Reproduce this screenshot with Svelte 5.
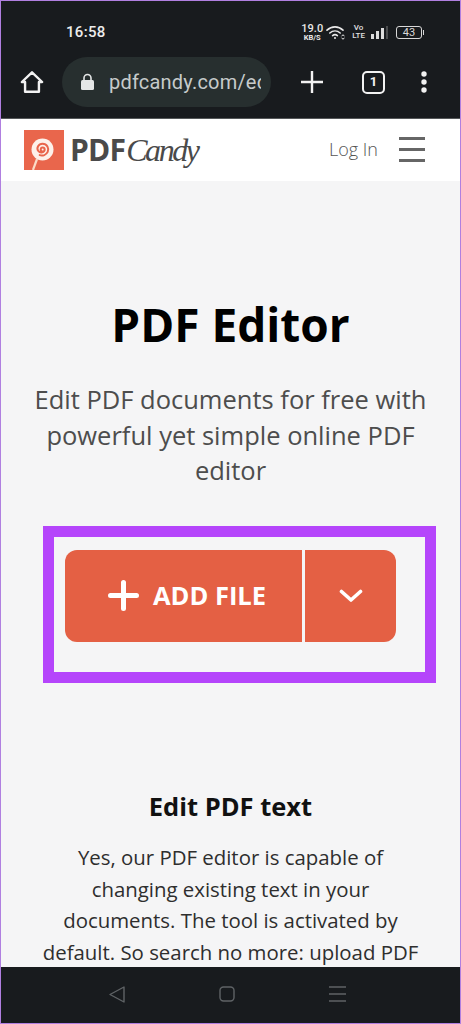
<script>
	const paragraph = [
		"Yes, our PDF editor is capable of",
		"changing existing text in your",
		"documents. The tool is activated by",
		"default. So search no more: upload PDF"
	];
</script>

<div class="phone">
	<header class="chrome">
		<div class="status">
			<span class="time">16:58</span>
			<div class="status-icons">
				<span class="speed"><b>19.0</b><i>KB/S</i></span>
				<svg width="19" height="15" viewBox="0 0 19 15" fill="none" stroke="#e8e8e8" stroke-width="1.6" stroke-linecap="round">
					<path d="M1 5.2C5.6.8 12.4.8 17 5.2" />
					<path d="M3.8 8C6.9 5.3 11.1 5.3 14.2 8" />
					<path d="M6.6 10.6C8 9.4 10 9.4 11.4 10.6" />
					<circle cx="9" cy="13" r="1" fill="#e8e8e8" stroke="none" />
					<path d="M15.8 11l1.2-1.3 1.2 1.3M15.8 13l1.2 1.3 1.2-1.3" stroke-width="1" />
				</svg>
				<span class="volte"><b>Vo</b><b>LTE</b></span>
				<svg class="signal" width="17" height="13" viewBox="0 0 17 13" fill="#dcdcdc">
					<rect x="0" y="8" width="3" height="5" />
					<rect x="5" y="5" width="3" height="8" />
					<rect x="10" y="2" width="3" height="11" />
					<rect x="15" y="0" width="2" height="13" fill="#4a4c4e" />
				</svg>
				<span class="battery">43</span>
			</div>
		</div>
		<div class="toolbar">
			<svg class="home" width="24" height="24" viewBox="0 0 26 26" fill="none" stroke="#f2f2f2" stroke-width="2.6" stroke-linejoin="round">
				<path d="M2 13 13 2.500 24 13h-3.500v10.500h-15V13z" />
			</svg>
			<div class="omnibox">
				<svg width="15" height="18" viewBox="0 0 15 18">
					<path d="M4 8V5a3.500 3.500 0 0 1 7 0v3" fill="none" stroke="#e4e6e6" stroke-width="1.6" />
					<rect x="1" y="7" width="13" height="10" rx="1.500" fill="#e4e6e6" />
				</svg>
				<span class="url">pdfcandy.com/edit</span>
			</div>
			<svg class="plus" width="22" height="22" viewBox="0 0 22 22" stroke="#f2f2f2" stroke-width="2.4">
				<path d="M11 0v22M0 11h22" />
			</svg>
			<span class="tabs">1</span>
			<svg class="more" width="6" height="22" viewBox="0 0 6 22" fill="#f2f2f2">
				<circle cx="3" cy="3" r="2.700" />
				<circle cx="3" cy="11" r="2.700" />
				<circle cx="3" cy="19" r="2.700" />
			</svg>
		</div>
	</header>

	<nav class="sitebar">
		<div class="logo">
			<svg width="40" height="40" viewBox="0 0 40 40">
				<rect width="40" height="40" fill="#e9664c" />
				<path d="M13 29 9 40" stroke="#fbdcc6" stroke-width="2.200" />
				<circle cx="18.500" cy="19.500" r="11" fill="#fdf1ea" />
				<path d="M18.500 21.500a2 2 0 1 1 2.200-2.200c0 3.200-4.400 4.300-6.400 1.700-2.200-2.900.2-7.300 4.200-7.300 4.500 0 6.900 4.800 5.200 8.200-1.500 3-5 4.200-8 3.200" fill="none" stroke="#e9664c" stroke-width="2" stroke-linecap="round" />
			</svg>
			<span class="pdf">PDF</span><span class="candy">Candy</span>
		</div>
		<div class="account">
			<span class="login">Log In</span>
			<div class="burger"><span></span><span></span><span></span></div>
		</div>
	</nav>

	<main>
		<h1>PDF Editor</h1>
		<p class="lead">Edit PDF documents for free with powerful yet simple online PDF editor</p>

		<div class="highlight">
			<div class="add-file">
				<div class="add-main">
					<svg width="31" height="31" viewBox="0 0 31 31" stroke="#fff" stroke-width="5" stroke-linecap="round">
						<path d="M15.500 2.500v26M2.500 15.500h26" />
					</svg>
					<span>ADD FILE</span>
				</div>
				<div class="add-more">
					<svg width="24" height="14" viewBox="0 0 24 14" fill="none" stroke="#fff" stroke-width="3.600" stroke-linecap="round" stroke-linejoin="round">
						<path d="M2.500 2.500 12 11l9.500-8.500" />
					</svg>
				</div>
			</div>
		</div>

		<h2>Edit PDF text</h2>
		<div class="body-text">
			{#each paragraph as line}
				<div>{line}</div>
			{/each}
		</div>
	</main>

	<footer class="navbar">
		<svg width="16" height="17" viewBox="0 0 16 17" fill="none" stroke="#5f6366" stroke-width="1.400" stroke-linejoin="round">
			<path d="M15 1v15L1 8.500z" />
		</svg>
		<svg width="16" height="16" viewBox="0 0 16 16" fill="none" stroke="#5f6366" stroke-width="1.400">
			<rect x="1" y="1" width="14" height="14" rx="3.500" />
		</svg>
		<svg width="17" height="16" viewBox="0 0 17 16" stroke="#5f6366" stroke-width="1.400">
			<path d="M0 1h17M0 8h17M0 15h17" />
		</svg>
	</footer>
</div>

<style>
	:global(body) {
		margin: 0;
		background: #f5f5f6;
	}

	.phone {
		box-sizing: border-box;
		width: 461px;
		height: 1024px;
		border: 1px solid #b07fe0;
		display: flex;
		flex-direction: column;
		overflow: hidden;
		font-family: "Open Sans", sans-serif;
		background: #f5f5f6;
	}

	.chrome {
		height: 118px;
		flex: none;
		background: #181b1e;
		color: #f0f0f0;
		border-bottom: 1px solid #55585a;
		box-sizing: border-box;
	}

	.status {
		height: 55px;
		padding: 15px 0 0 65px;
		box-sizing: border-box;
		display: flex;
		justify-content: space-between;
	}

	.time {
		font: 500 15px/32px Roboto, sans-serif;
		letter-spacing: 0.3px;
		color: #ececec;
	}

	.status-icons {
		display: flex;
		align-items: center;
		height: 32px;
		padding-right: 38px;
	}

	.speed {
		display: flex;
		flex-direction: column;
		align-items: center;
		width: 20px;
		font-family: Roboto, sans-serif;
		color: #e8e8e8;
		margin-right: 4px;
	}

	.speed b {
		font-size: 11px;
		line-height: 11px;
		font-weight: 500;
	}

	.speed i {
		font-size: 7.500px;
		line-height: 8px;
		font-style: normal;
		font-weight: 700;
	}

	.volte {
		display: flex;
		flex-direction: column;
		align-items: center;
		margin: 0 6px 0 7px;
		color: #e0e0e0;
		font-family: Roboto, sans-serif;
	}

	.volte b {
		font-size: 8px;
		line-height: 8px;
		font-weight: 500;
	}

	.signal {
		margin-right: 8px;
	}

	.battery {
		box-sizing: border-box;
		width: 26px;
		height: 13px;
		border: 1px solid #d8d8d8;
		border-radius: 3px;
		font: 11px/11px Roboto, sans-serif;
		text-align: center;
		color: #d8d8d8;
		position: relative;
	}

	.battery::after {
		content: "";
		position: absolute;
		right: -3px;
		top: 3px;
		width: 1.500px;
		height: 5px;
		background: #d8d8d8;
	}

	.toolbar {
		display: flex;
		align-items: center;
		height: 52px;
		padding-left: 19px;
	}

	.omnibox {
		width: 209px;
		height: 50px;
		margin-left: 18px;
		padding-left: 18px;
		box-sizing: border-box;
		display: flex;
		align-items: center;
		gap: 14px;
		border-radius: 25px;
		background: #272f2f;
	}

	.url {
		width: 152px;
		overflow: hidden;
		white-space: nowrap;
		font: 20px Roboto, sans-serif;
		letter-spacing: 0.2px;
		color: #c6cbcb;
	}

	.plus {
		margin-left: 30px;
	}

	.tabs {
		box-sizing: border-box;
		width: 23px;
		height: 23px;
		margin-left: 39px;
		border: 2.400px solid #f2f2f2;
		border-radius: 5px;
		font: 700 13px/18px Roboto, sans-serif;
		text-align: center;
		color: #f2f2f2;
	}

	.more {
		margin-left: 36px;
	}

	.sitebar {
		flex: none;
		height: 62px;
		box-sizing: border-box;
		padding: 0 35px 0 23px;
		background: #fff;
		display: flex;
		align-items: center;
		justify-content: space-between;
	}

	.logo {
		display: flex;
		align-items: center;
		margin-top: -1px;
	}

	.pdf {
		margin-left: 6px;
		font: 700 30px/40px "Open Sans", sans-serif;
		letter-spacing: -0.8px;
		color: #4a4a4a;
	}

	.candy {
		font: italic 32px/40px "Liberation Serif", serif;
		letter-spacing: -2.400px;
		color: #4a4a4a;
		margin-left: 1px;
	}

	.account {
		display: flex;
		align-items: center;
		gap: 21px;
	}

	.login {
		font-size: 18px;
		font-weight: 300;
		color: #555;
		margin-top: -2px;
	}

	.burger {
		display: flex;
		flex-direction: column;
		gap: 8px;
		width: 26px;
		margin-top: -2px;
	}

	.burger span {
		height: 3px;
		background: #666;
	}

	main {
		flex: 1;
		min-height: 0;
		overflow: hidden;
		text-align: center;
		background: #f5f5f6;
	}

	h1 {
		margin: 111px 0 0;
		font-size: 46px;
		line-height: 64px;
		font-weight: 700;
		color: #000;
	}

	.lead {
		margin: 26px auto 0;
		width: 420px;
		font-size: 25.500px;
		line-height: 35.700px;
		color: #4d4d4d;
	}

	.highlight {
		box-sizing: border-box;
		width: 393px;
		height: 157px;
		margin: 36.900px 0 0 42px;
		padding: 13px 0 0 11px;
		border: 11px solid #b545fb;
	}

	.add-file {
		display: flex;
		width: 331px;
		height: 92px;
		border-radius: 12px;
		overflow: hidden;
		color: #fff;
	}

	.add-main {
		width: 237px;
		padding: 0 0 2px 7px;
		box-sizing: border-box;
		background: #e46044;
		display: flex;
		align-items: center;
		justify-content: center;
		gap: 14px;
		font-size: 25.500px;
		font-weight: 700;
	}

	.add-more {
		flex: 1;
		margin-left: 3px;
		background: #e46044;
		display: flex;
		align-items: center;
		justify-content: center;
	}

	h2 {
		margin: 105px 0 0;
		font-size: 25.500px;
		line-height: 36px;
		font-weight: 700;
		color: #111;
	}

	.body-text {
		margin-top: 18px;
		font-size: 20.400px;
		line-height: 31.600px;
		color: #2e2e2e;
		white-space: nowrap;
	}

	.navbar {
		flex: none;
		height: 56px;
		padding: 0 6px 2px 0;
		box-sizing: border-box;
		background: #181b1e;
		display: flex;
		align-items: center;
		justify-content: center;
		gap: 94px;
	}
</style>
